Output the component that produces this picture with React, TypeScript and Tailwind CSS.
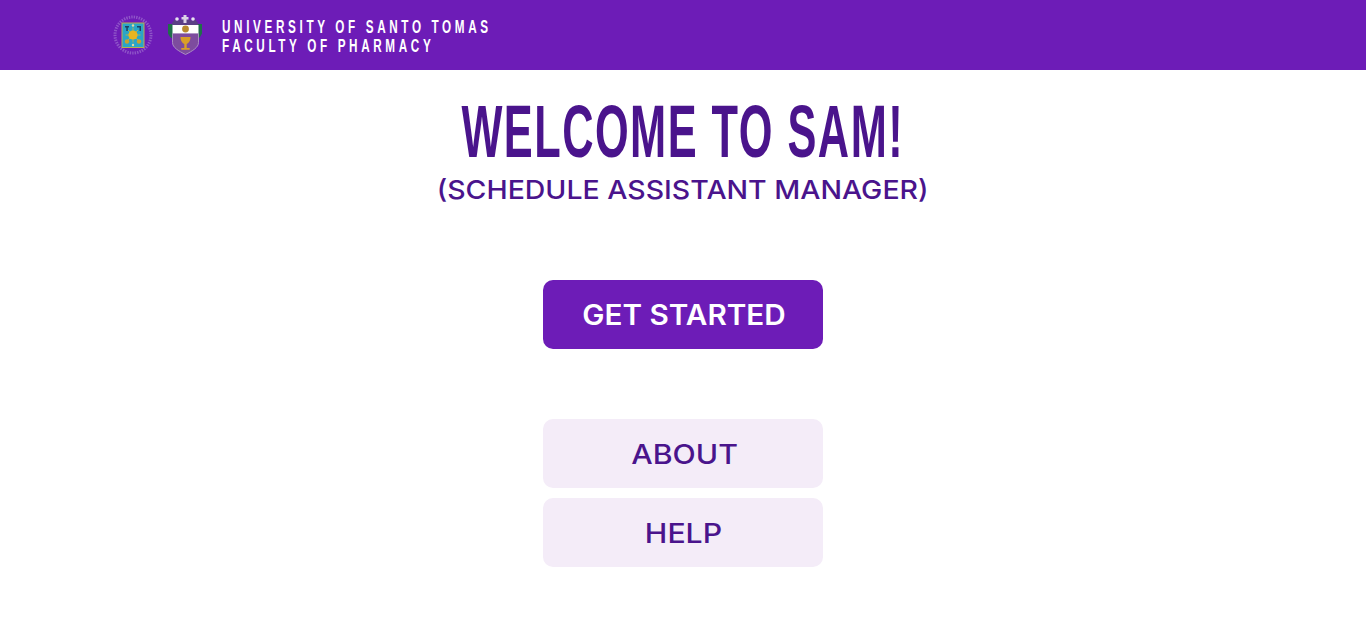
const heading = "font-['Liberation_Sans',sans-serif] font-bold";
const body = "font-['Inter',sans-serif]";

function UstSeal() {
  return (
    <svg width="42" height="42" viewBox="0 0 42 42" className="shrink-0">
      <circle cx="21" cy="21" r="18" fill="none" stroke="#8f55c8" strokeWidth="3" strokeDasharray="1.400 1.100" />
      <rect x="10" y="9" width="22" height="24.500" fill="#2aa5c8" stroke="#b9b04e" strokeWidth="1" />
      <circle cx="21" cy="21" r="4.600" fill="#e8b51f" />
      <path d="M21 13.500v15M13.500 21h15M16 16l10 10M26 16l-10 10" stroke="#e8b51f" strokeWidth="0.700" />
      <path d="M13 12h4v1.500h-1.200V17h-1.500v-3.500H13z" fill="#1c3f63" />
      <path d="M25 12h4v5h-1.500v-3.500H25z" fill="#1c3f63" />
      <circle cx="15" cy="27.500" r="2.200" fill="#c9a22e" />
      <circle cx="27" cy="27.500" r="2.200" fill="#c9a22e" />
      <circle cx="21" cy="11.500" r="1.200" fill="#e8d8a0" />
      <circle cx="21" cy="31" r="1.200" fill="#e8d8a0" />
    </svg>
  );
}

function PharmacyCrest() {
  return (
    <svg width="36" height="42" viewBox="0 0 36 42" className="shrink-0">
      <path d="M1 10h5v15l-3-2-2-3.500zM30.500 10H35v9.500l-2 3.500-2.500 2z" fill="#1f6f4a" />
      <path d="M5 9l3-4 2 2 3-1 5-1 5 1 3 1 2-2 3 4v2H5z" fill="#5b3f86" />
      <path d="M16.500 1h3v2h2v2.500h-2V9h-3V5.500h-2V3h2z" fill="#dcd3e8" />
      <circle cx="10" cy="5" r="1.800" fill="#e8e2f0" />
      <circle cx="26" cy="5" r="1.800" fill="#e8e2f0" />
      <rect x="5.500" y="11" width="26" height="8.500" fill="#ffffff" />
      <circle cx="18.500" cy="15" r="3.400" fill="#b98a2c" />
      <path d="M5.500 19.500h26v9c0 5-6 8.500-13 12-7-3.500-13-7-13-12z" fill="#7d4c9e" stroke="#b8a3c9" strokeWidth="0.800" />
      <path d="M13.500 23h10c0 4.500-2.500 6.500-3.800 7v4h3v1.800h-8.400V34h3v-4c-1.300-.5-3.800-2.500-3.800-7z" fill="#d99f28" />
    </svg>
  );
}

export default function App() {
  return (
    <div className="min-h-screen bg-white">
      {/* Header */}
      <header className="flex h-[70px] items-center bg-[#6d1cb7] pl-[112px]">
        <div className="flex items-center gap-[13px]">
          <UstSeal />
          <PharmacyCrest />
        </div>
        <div className={`ml-[19px] origin-left scale-x-[0.65] pt-[4px] text-[18px] leading-[19px] tracking-[5.600px] whitespace-nowrap text-white ${heading}`}>
          <div>UNIVERSITY OF SANTO TOMAS</div>
          <div>FACULTY OF PHARMACY</div>
        </div>
      </header>

      <main className="flex flex-col items-center">
        <h1 className={`mt-[20px] scale-x-[0.586] text-[74px] leading-[84px] tracking-[2.500px] whitespace-nowrap text-[#4a148c] ${heading}`}>
          WELCOME TO SAM!
        </h1>
        <p className={`scale-x-[1.095] text-[26px] leading-[32px] font-medium whitespace-nowrap text-[#4a148c] ${body}`}>
          (SCHEDULE ASSISTANT MANAGER)
        </p>

        <button className={`mt-[74px] h-[69px] w-[280px] rounded-[10px] bg-[#6d1cb7] pl-[2px] text-[28px] font-semibold text-white ${body}`}>
          <span className="inline-block scale-x-[1.06]">GET STARTED</span>
        </button>

        <div className="mt-[70px] flex flex-col gap-[10px]">
          <button className={`h-[69px] w-[280px] rounded-[10px] bg-[#f4ecf8] pt-[3px] pl-[4px] text-[27px] font-medium text-[#4a148c] ${body}`}>
            <span className="inline-block scale-x-[1.12]">ABOUT</span>
          </button>
          <button className={`h-[69px] w-[280px] rounded-[10px] bg-[#f4ecf8] pt-[3px] pl-[1px] text-[27px] font-medium text-[#4a148c] ${body}`}>
            <span className="inline-block scale-x-[1.12]">HELP</span>
          </button>
        </div>
      </main>
    </div>
  );
}
